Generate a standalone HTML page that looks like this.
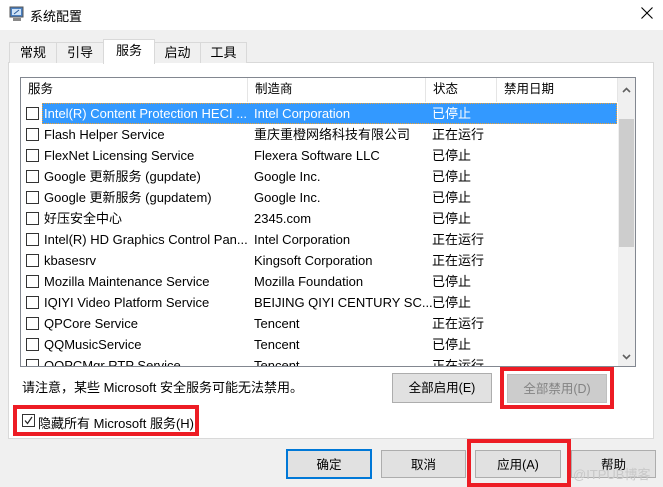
<!DOCTYPE html>
<html><head><meta charset="utf-8"><style>
*{margin:0;padding:0;box-sizing:border-box}
body{width:663px;height:487px;overflow:hidden;background:#f0f0f0;font-family:"Liberation Sans","Noto Sans CJK SC",sans-serif;font-size:12.5px;color:#000;position:relative}
.a{position:absolute}
.title{left:0;top:0;width:663px;height:30px;background:#fff}
.tab{top:42px;height:21px;border:1px solid #d9d9d9;border-bottom:none;background:#f0f0f0;text-align:center;line-height:20px;font-size:13px}
.panel{left:8px;top:62px;width:646px;height:377px;background:#fff;border:1px solid #d9d9d9}
.list{left:20px;top:77px;width:616px;height:290px;border:1px solid #828790;background:#fff;overflow:hidden}
.hd{position:absolute;top:0;height:24px;line-height:23px;border-right:1px solid #e5e5e5;padding-left:7px;font-size:12.5px}
.row{position:absolute;left:0;width:596px;height:21px;line-height:21px;white-space:nowrap;font-size:13px}
.cb{position:absolute;left:5px;top:4px;width:13px;height:13px;border:1px solid #333;background:#fff}
.c1{position:absolute;left:23px}.c2{position:absolute;left:233px}.c3{position:absolute;left:411px}
.sel{background:#3399ff;color:#fff}
.btn{height:30px;background:#e1e1e1;border:1px solid #adadad;text-align:center;line-height:28px;font-size:12.5px}
.red{border:4px solid #ed1c24}
</style></head><body>
<div class="a title"></div>
<svg class="a" style="left:8px;top:5px" width="18" height="18" viewBox="0 0 18 18"><rect x="2" y="2" width="13" height="10" fill="#4a7fc0" stroke="#555"/><rect x="4" y="4" width="9" height="6" fill="#cfe3f7"/><path d="M6 9 L11 5" stroke="#2a5a9a"/><rect x="5" y="13" width="8" height="3" fill="#888"/></svg>
<div class="a" style="left:30px;top:6px;font-size:13px">系统配置</div>
<svg class="a" style="left:641px;top:7px" width="12" height="12" viewBox="0 0 12 12"><path d="M0.5 0.5 L11.5 11.5 M11.5 0.5 L0.5 11.5" stroke="#000" stroke-width="1.1"/></svg>
<div class="a panel"></div>
<div class="a tab" style="left:9px;width:48px">常规</div>
<div class="a tab" style="left:56px;width:48px">引导</div>
<div class="a tab" style="left:154px;width:47px">启动</div>
<div class="a tab" style="left:200px;width:47px">工具</div>
<div class="a tab" style="left:103px;top:39px;height:25px;width:52px;background:#fff;line-height:22px">服务</div>
<div class="a list">
<div class="hd" style="left:0;width:227px">服务</div>
<div class="hd" style="left:227px;width:178px">制造商</div>
<div class="hd" style="left:405px;width:71px">状态</div>
<div class="hd" style="left:476px;width:121px">禁用日期</div>
<div class="a" style="left:597px;top:0;width:17px;height:290px;background:#f0f0f0"></div>
<svg class="a" style="left:601px;top:9px" width="9" height="6" viewBox="0 0 9 6"><path d="M1 5 L4.5 1.5 L8 5" stroke="#606060" stroke-width="1.6" fill="none"/></svg>
<div class="a" style="left:598px;top:41px;width:15px;height:128px;background:#cdcdcd"></div>
<svg class="a" style="left:601px;top:276px" width="9" height="6" viewBox="0 0 9 6"><path d="M1 1 L4.5 4.5 L8 1" stroke="#606060" stroke-width="1.6" fill="none"/></svg>
<div class="row sel" style="top:25px;left:21px;width:575px;border:1px dotted #f0a030"></div>
<div class="row" style="top:25px"><span class="cb"></span><span class="c1" style="color:#fff">Intel(R) Content Protection HECI ...</span><span class="c2" style="color:#fff">Intel Corporation</span><span class="c3" style="color:#fff">已停止</span></div>
<div class="row" style="top:46px"><span class="cb"></span><span class="c1">Flash Helper Service</span><span class="c2">重庆重橙网络科技有限公司</span><span class="c3">正在运行</span></div>
<div class="row" style="top:67px"><span class="cb"></span><span class="c1">FlexNet Licensing Service</span><span class="c2">Flexera Software LLC</span><span class="c3">已停止</span></div>
<div class="row" style="top:88px"><span class="cb"></span><span class="c1">Google 更新服务 (gupdate)</span><span class="c2">Google Inc.</span><span class="c3">已停止</span></div>
<div class="row" style="top:109px"><span class="cb"></span><span class="c1">Google 更新服务 (gupdatem)</span><span class="c2">Google Inc.</span><span class="c3">已停止</span></div>
<div class="row" style="top:130px"><span class="cb"></span><span class="c1">好压安全中心</span><span class="c2">2345.com</span><span class="c3">已停止</span></div>
<div class="row" style="top:151px"><span class="cb"></span><span class="c1">Intel(R) HD Graphics Control Pan...</span><span class="c2">Intel Corporation</span><span class="c3">正在运行</span></div>
<div class="row" style="top:172px"><span class="cb"></span><span class="c1">kbasesrv</span><span class="c2">Kingsoft Corporation</span><span class="c3">正在运行</span></div>
<div class="row" style="top:193px"><span class="cb"></span><span class="c1">Mozilla Maintenance Service</span><span class="c2">Mozilla Foundation</span><span class="c3">已停止</span></div>
<div class="row" style="top:214px"><span class="cb"></span><span class="c1">IQIYI Video Platform Service</span><span class="c2">BEIJING QIYI CENTURY SC...</span><span class="c3">已停止</span></div>
<div class="row" style="top:235px"><span class="cb"></span><span class="c1">QPCore Service</span><span class="c2">Tencent</span><span class="c3">正在运行</span></div>
<div class="row" style="top:256px"><span class="cb"></span><span class="c1">QQMusicService</span><span class="c2">Tencent</span><span class="c3">已停止</span></div>
<div class="row" style="top:277px"><span class="cb"></span><span class="c1">QQPCMgr RTP Service</span><span class="c2">Tencent</span><span class="c3">正在运行</span></div>
</div>
<div class="a" style="left:22px;top:377px;font-size:13px">请注意，某些 Microsoft 安全服务可能无法禁用。</div>
<div class="a btn" style="left:392px;top:373px;width:100px">全部启用(E)</div>
<div class="a red" style="left:500px;top:367px;width:114px;height:42px"></div>
<div class="a btn" style="left:507px;top:374px;width:100px;height:29px;background:#cccccc;border-color:#bfbfbf;color:#838383">全部禁用(D)</div>
<div class="a red" style="left:13px;top:405px;width:186px;height:31px"></div>
<div class="a" style="left:22px;top:414px;width:13px;height:13px;border:1px solid #333;background:#fff"></div>
<svg class="a" style="left:24px;top:416px" width="9" height="9" viewBox="0 0 9 9"><path d="M1 4.5 L3.5 7.5 L8 1" stroke="#222" stroke-width="1.2" fill="none"/></svg>
<div class="a" style="left:38px;top:413px;font-size:13px">隐藏所有 Microsoft 服务(H)</div>
<div class="a btn" style="left:286px;top:449px;width:86px;height:30px;border:2px solid #0078d7">确定</div>
<div class="a btn" style="left:381px;top:450px;width:85px;height:28px">取消</div>
<div class="a red" style="left:467px;top:439px;width:104px;height:48px"></div>
<div class="a btn" style="left:475px;top:450px;width:86px;height:28px">应用(A)</div>
<div class="a btn" style="left:571px;top:450px;width:85px;height:28px">帮助</div>
<div class="a" style="left:573px;top:464px;color:#c8c8c8;font-size:13px">@ITPUB博客</div>
</body></html>
